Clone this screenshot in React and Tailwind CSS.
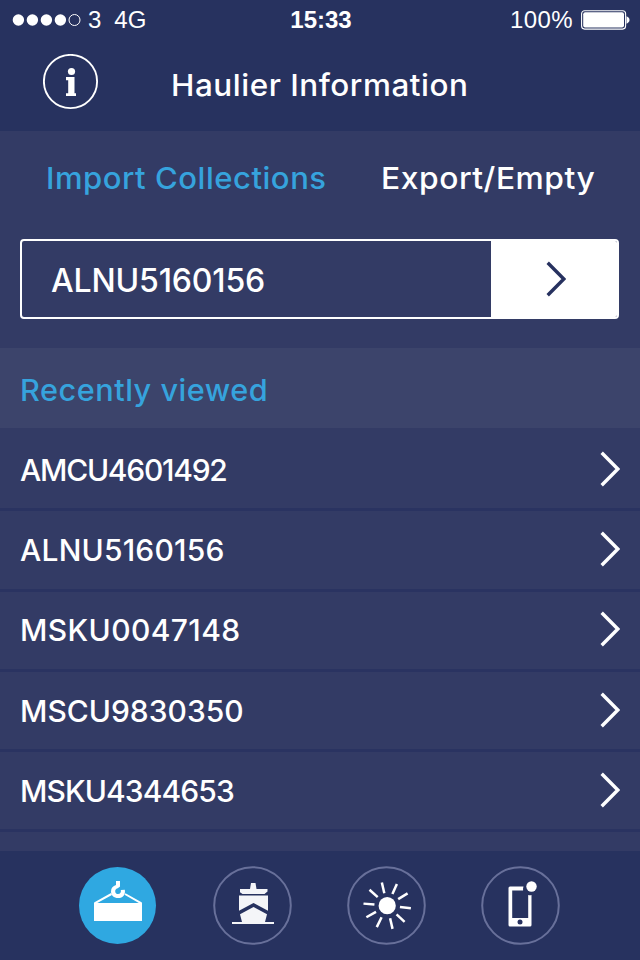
const RECENT = [
  { id: 'AMCU4601492', cls: 'tracking-[-1.25px]' },
  { id: 'ALNU5160156', cls: 'tracking-[0.2px]' },
  { id: 'MSKU0047148', cls: 'tracking-[0.4px]' },
  { id: 'MSCU9830350', cls: 'tracking-[0px]' },
  { id: 'MSKU4344653', cls: 'tracking-[-0.9px]' },
];

// sun ray angles, in degrees clockwise from the right
const RAYS = [6, 43, 77, 116, 151, 185, 222, 257, 294, 329];

function Chevron({ color = '#ffffff' }) {
  return (
    <svg width="20" height="36" viewBox="0 0 20 36" fill="none" className="block">
      <path d="M1.7 1.8 17.8 18 1.7 34.2" stroke={color} strokeWidth="3.4" />
    </svg>
  );
}

function StatusBar() {
  return (
    <div className="grid h-10 grid-cols-3 items-center pr-[10px] pl-3 font-['Liberation_Sans',sans-serif] text-[24px] leading-none text-white">
      <div className="flex items-center">
        <svg width="70" height="14" viewBox="0 0 70 14">
          {[6.4, 20.4, 34.4, 48.4].map(x => <circle key={x} cx={x} cy="7" r="5.7" fill="#fff" />)}
          <circle cx="62.5" cy="7" r="5.5" fill="none" stroke="#fff" strokeWidth="1" />
        </svg>
        <span className="ml-[6px]">3</span>
        <span className="ml-[13px]">4G</span>
      </div>
      <p className="text-center font-bold">15:33</p>
      <div className="flex items-center justify-end gap-2">
        <span className="tracking-[0.4px]">100%</span>
        <svg width="49" height="20" viewBox="0 0 49 20">
          <rect x="0.6" y="0.7" width="44" height="18.4" rx="3" fill="none" stroke="#fff" strokeWidth="1.1" />
          <rect x="2.2" y="2.3" width="40.8" height="15.2" rx="2" fill="#fff" />
          <path d="M45.500 6.300c2 1 3 2 3 3.700s-1 2.700-3 3.700z" fill="#fff" />
        </svg>
      </div>
    </div>
  );
}

function Header() {
  return (
    <header className="flex h-[91px] items-start pl-[43px]">
      <svg width="56" height="56" viewBox="0 0 56 56" className="mt-[14px]">
        <circle cx="27.5" cy="27.5" r="26.6" fill="none" stroke="#fff" strokeWidth="1.9" />
        <circle cx="28.5" cy="17.5" r="3.6" fill="#fff" />
        <path d="M23 23h8.500v16.300H33V42H23v-2.700h2.200V26.200H23z" fill="#fff" />
      </svg>
      <h1 className="mt-[25px] ml-[72px] origin-left scale-x-[1.048] text-[30px] leading-[40px] tracking-[0.5px]">Haulier Information</h1>
    </header>
  );
}

function CraneIcon() {
  return (
    <svg width="78" height="78" viewBox="0 0 78 78">
      <circle cx="38.5" cy="38.5" r="38.5" fill="#2fa8e1" />
      <rect x="15" y="36" width="48" height="18" fill="#fff" />
      <path d="M15.500 36.300 32.500 27M62.500 36.300 46 27" stroke="#fff" strokeWidth="2" />
      <path d="M37 14h4v5.500c-1 1.800-4.800 1.700-4.800 4.700 0 1.900 1.200 2.800 2.800 2.800 2.400 0 3.300-1.700 2.800-4l4-.3c.9 4.800-1.800 8.300-6.600 8.300-4.400 0-7.200-2.800-7.200-6.600 0-3.200 2-5.400 5-6.300z" fill="#fff" />
    </svg>
  );
}

function Ring({ children }) {
  return (
    <svg width="79" height="79" viewBox="0 0 79 79">
      <circle cx="39.5" cy="39.5" r="38.3" fill="none" stroke="#68709a" strokeWidth="2" />
      {children}
    </svg>
  );
}

function ShipIcon() {
  return (
    <Ring>
      <g fill="#f4f5f8">
        <path d="M38 17h4.500l1 6H54.500v2.500l-3 2.500h-22L27 26.200V23h10z" />
        <path d="M26 29.500h29v15.300L40.500 37 26 44.800z" />
        <path d="M40.500 41 54 48.300 52 56h9v2H19v-2h10l-2-7.700z" />
      </g>
    </Ring>
  );
}

function SunIcon() {
  return (
    <Ring>
      <circle cx="40.200" cy="39.700" r="8.600" fill="#fff" />
      <g stroke="#fff" strokeWidth="2.500">
        {RAYS.map(deg => (
          <path key={deg} d="M53 39.700H64" transform={`rotate(${deg} 40.200 39.700)`} />
        ))}
      </g>
    </Ring>
  );
}

function PhoneIcon() {
  return (
    <Ring>
      <path d="M29 20.500h13.500c-.5 1.300-.6 2.500-.4 4H31.200v27.500h16V29c1.300.3 2.300.3 3.300 0v30q0 1.500-1.500 1.500H29q-1.500 0-1.500-1.500V22q0-1.500 1.500-1.500z" fill="#fff" />
      <circle cx="39" cy="56" r="2.500" fill="#27315f" />
      <circle cx="50.500" cy="20.500" r="5.200" fill="#fff" />
    </Ring>
  );
}

export default function App() {
  return (
    <div className="flex h-[960px] w-[640px] flex-col overflow-hidden bg-[#27325f] font-['Inter',sans-serif] font-medium text-white">
      <StatusBar />
      <Header />

      <main className="flex h-[720px] flex-col overflow-hidden bg-[#333b65]">
        <div className="flex h-[108px] items-start pt-[27px] pl-[46px] text-[30px] leading-[40px] whitespace-nowrap">
          <button className="w-[335px] origin-left scale-x-[1.035] text-left tracking-[0.5px] text-[#36a3dd]">Import Collections</button>
          <button className="origin-left scale-x-[1.06] text-left tracking-[0.5px]">Export/Empty</button>
        </div>

        <div className="mx-5 flex h-20 w-[599px] shrink-0 overflow-hidden rounded-[4px] border-2 border-white">
          <div className="flex flex-1 items-center pt-1 pl-[29px] text-[32px] leading-none tracking-[-0.15px]">ALNU5160156</div>
          <button className="flex w-[126px] items-center justify-center bg-white pl-1">
            <Chevron color="#27315f" />
          </button>
        </div>

        <h2 className="mt-[29px] flex h-20 shrink-0 items-center bg-[#3c446b] pt-1 pl-5 text-[30px] leading-none tracking-[0.5px] text-[#36a3dd]">
          <span className="origin-left scale-x-[1.022]">Recently viewed</span>
        </h2>

        <ul className="pt-[3px]">
          {RECENT.map(r => (
            <li key={r.id} className="flex h-[80.3px] items-center justify-between border-b-3 border-[#2a3361] pr-5 pb-[2px] pl-5 text-[30px] leading-none">
              <span className={`pt-[2.5px] ${r.cls}`}>{r.id}</span>
              <Chevron />
            </li>
          ))}
        </ul>
      </main>

      <nav className="flex h-[109px] items-start pt-[15px] pl-[79px]">
        <button className="mt-px w-[134px]"><CraneIcon /></button>
        <button className="w-[134px]"><ShipIcon /></button>
        <button className="w-[134px]"><SunIcon /></button>
        <button><PhoneIcon /></button>
      </nav>
    </div>
  );
}
